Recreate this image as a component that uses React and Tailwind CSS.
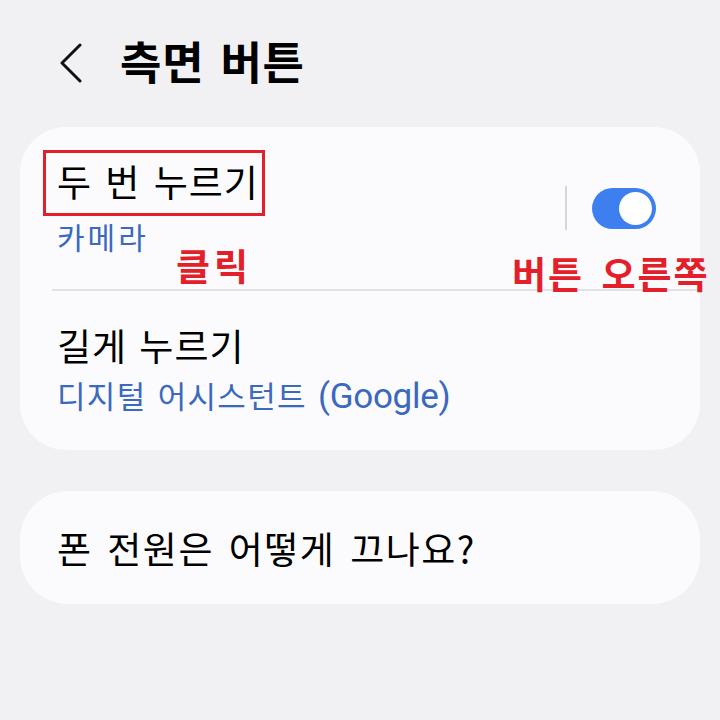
import React from "react"

const font = { fontFamily: '"Noto Sans CJK KR", "Noto Sans", sans-serif' }
const latin = { fontFamily: 'Roboto, "Noto Sans", sans-serif' }

function Toggle() {
  return (
    <div className="flex items-center self-center">
      <div className="w-[2px] h-[44px] bg-[#d6d6da]" />
      <div className="ml-[25px] w-[64px] h-[41px] rounded-full bg-[#3e7ff0] flex items-center justify-end pr-[4px]">
        <div className="w-[33px] h-[33px] rounded-full bg-white" />
      </div>
    </div>
  )
}

export default function App() {
  return (
    <div className="w-[720px] h-[720px] bg-[#f1f1f4] overflow-hidden" style={font}>
      {/* header */}
      <div className="flex items-center h-[127px] pl-[60px] pb-[6px]">
        <svg width="22" height="40" viewBox="0 0 22 40" className="mr-[38px] mt-[4px]">
          <path d="M20 2 L2 20 L20 38" fill="none" stroke="#111" strokeWidth="3" strokeLinecap="round" strokeLinejoin="round" />
        </svg>
        <h1 className="text-[45px] leading-[44px] font-bold text-black tracking-[0.8px] [word-spacing:5px]">측면 버튼</h1>
      </div>

      {/* card 1 */}
      <div className="mx-[20px] rounded-[46px] bg-[#fbfbfd]">
        <div className="relative flex justify-between pl-[37px] pr-[44px] h-[162px]">
          <div className="flex flex-col pt-[31px]">
            <div className="relative">
              <span className="block text-[37px] leading-[46px] text-black tracking-[1px] [word-spacing:4px]">두 번 누르기</span>
              <span className="absolute -left-[14px] -top-[8px] w-[222px] h-[66px] border-[3px] border-[#e3202a]" />
            </div>
            <span className="mt-[13px] text-[30px] leading-[38px] text-[#3a69bd] tracking-[3px]">카메라</span>
          </div>
          <Toggle />
          <span className="absolute left-[156px] top-[120px] whitespace-nowrap text-[37px] font-bold text-[#e3202a] leading-none tracking-[4px]">클릭</span>
          <span className="absolute left-[492px] top-[128px] whitespace-nowrap text-[37px] font-bold text-[#e3202a] leading-none tracking-[2px] [word-spacing:7px]">버튼 오른쪽</span>
        </div>
        <div className="ml-[32px] h-[2px] bg-[#e2e2e6]" />
        <div className="flex flex-col pl-[37px] pt-[31px] h-[159px]">
          <span className="text-[37px] leading-[46px] text-black tracking-[1px] [word-spacing:3px]">길게 누르기</span>
          <span className="mt-[8px] text-[31px] leading-[38px] text-[#3a69bd] tracking-[1.3px] [word-spacing:3px]">
            디지털 어시스턴트{" "}
            <span className="text-[35px] tracking-[-0.3px]" style={latin}>(Google)</span>
          </span>
        </div>
      </div>

      {/* card 2 */}
      <div className="mx-[20px] mt-[41px] h-[113px] rounded-[48px] bg-[#fbfbfd] flex items-center pl-[37px]">
        <span className="text-[37px] leading-[46px] text-black tracking-[1.5px] [word-spacing:5px]">폰 전원은 어떻게 끄나요?</span>
      </div>
    </div>
  )
}
